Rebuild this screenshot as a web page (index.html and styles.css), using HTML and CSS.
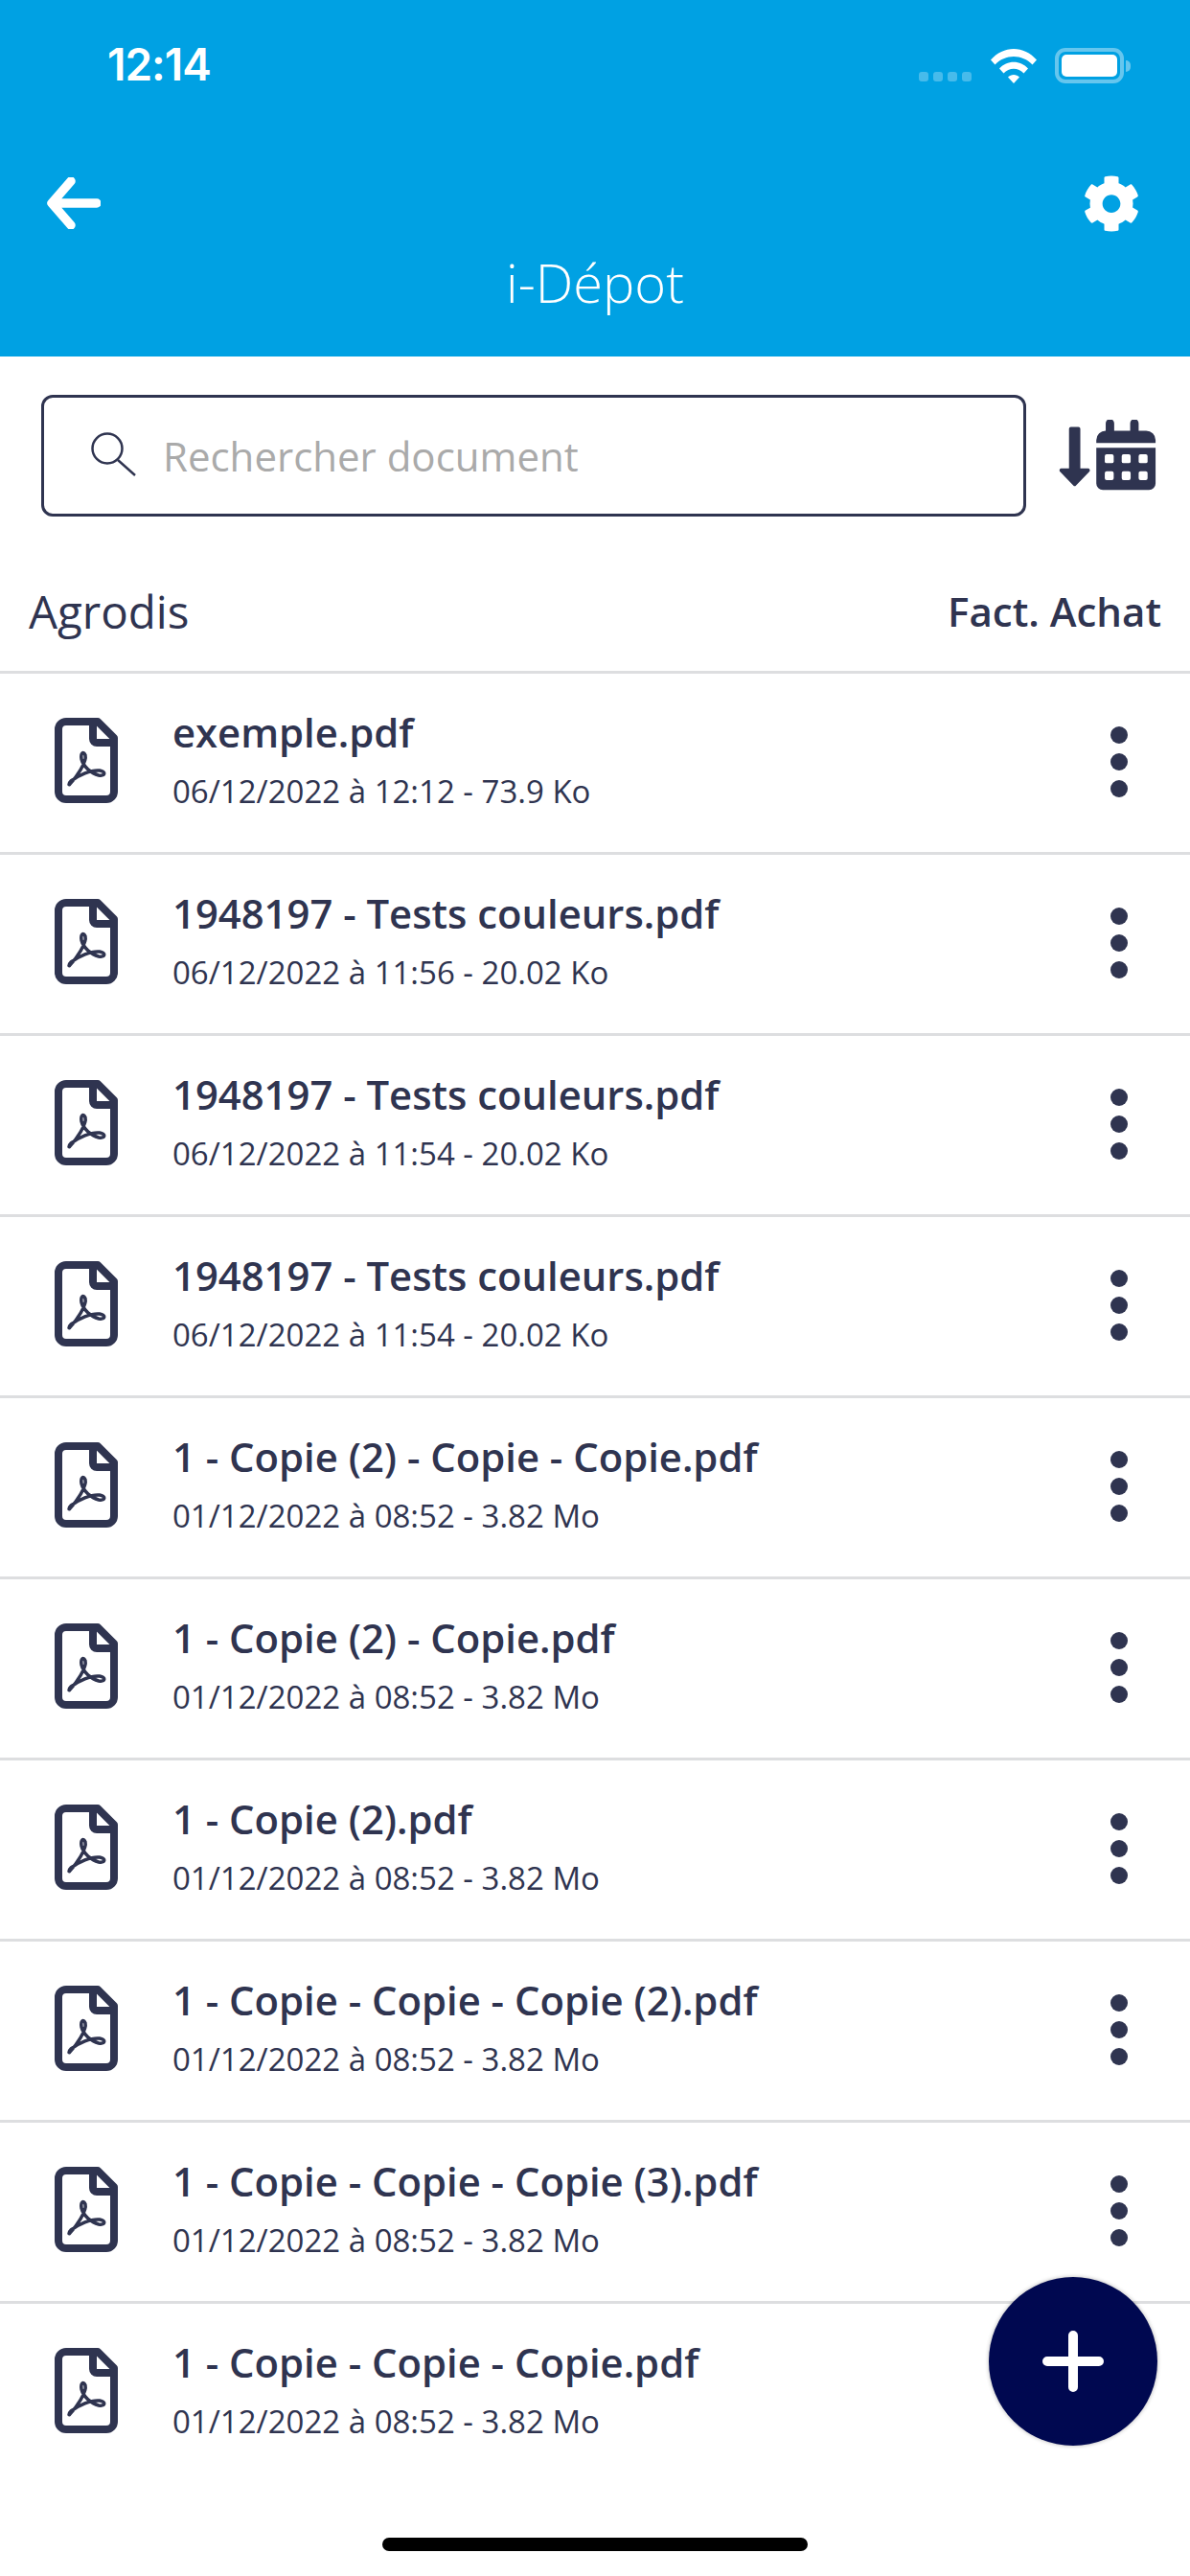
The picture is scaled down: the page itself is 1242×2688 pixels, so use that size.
FILE: index.html
```html
<!DOCTYPE html>
<html lang="fr">
<head>
  <meta charset="UTF-8">
  <meta name="viewport" content="width=device-width, initial-scale=1.0">
  <title>i-Dépot</title>
  <link rel="stylesheet" href="styles.css">
</head>
<body>
  <svg class="defs" width="0" height="0">
    <symbol id="pdf" viewBox="0 0 66 89">
      <path d="M12 4H45L62 21V77a8 8 0 0 1-8 8H12a8 8 0 0 1-8-8V12a8 8 0 0 1 8-8Z" fill="none" stroke="#2f3450" stroke-width="8" stroke-linejoin="round"/>
      <path d="M40 4V22a4 4 0 0 0 4 4H62" fill="none" stroke="#2f3450" stroke-width="8"/>
      <path d="M16 69C22 63 34 46 32 39C30 34 27 37 28 43C30 51 38 58 46 60C53 61 54 56 47 55C38 54 25 60 17 66C14 69 15 71 16 69Z" fill="none" stroke="#2f3450" stroke-width="3.5" stroke-linejoin="round"/>
    </symbol>
  </svg>

  <div class="page">
    <header class="header">
      <div class="status">
        <span class="time">12:14</span>
        <div class="status-icons">
          <div class="signal"><i></i><i></i><i></i><i></i></div>
          <svg class="wifi" viewBox="0 0 48 37">
            <path d="M0 12.5C13-3 35-3 48 12.5L43.500 17.500C33 6 15 6 4.500 17.500Z" fill="#fff"/>
            <path d="M9 21.500C17 12.500 31 12.500 39 21.500L34.500 26.500C29 20 19 20 13.500 26.500Z" fill="#fff"/>
            <path d="M18 30.500C21 27 27 27 30 30.500L24 37Z" fill="#fff"/>
          </svg>
          <div class="battery"><div class="battery-level"></div></div>
        </div>
      </div>
      <div class="nav">
        <svg class="back" viewBox="0 0 56 54">
          <path d="M25 4L5 27L25 50M7 27H52" fill="none" stroke="#fff" stroke-width="9.500" stroke-linecap="round" stroke-linejoin="round"/>
        </svg>
        <svg class="gear" viewBox="0 0 512 512">
          <path fill="#fff" d="M487.4 315.7l-42.6-24.6c4.3-23.2 4.3-47 0-70.2l42.6-24.6c4.9-2.800 7.100-8.600 5.500-14-11.100-35.600-30-67.800-54.700-94.600-3.800-4.100-10-5.100-14.800-2.300L380.800 110c-17.900-15.400-38.500-27.300-60.800-35.100V25.800c0-5.600-3.900-10.500-9.400-11.700-36.700-8.200-74.300-7.800-109.200 0-5.500 1.200-9.400 6.100-9.400 11.700V75c-22.200 7.900-42.800 19.800-60.800 35.100L88.700 85.500c-4.900-2.800-11-1.900-14.800 2.300-24.700 26.700-43.600 58.900-54.700 94.600-1.700 5.400.6 11.200 5.500 14L67.300 221c-4.300 23.200-4.300 47 0 70.200l-42.600 24.600c-4.900 2.800-7.100 8.600-5.500 14 11.100 35.600 30 67.800 54.700 94.600 3.800 4.100 10 5.100 14.800 2.300l42.600-24.600c17.900 15.400 38.500 27.300 60.800 35.100v49.200c0 5.600 3.900 10.500 9.400 11.700 36.700 8.200 74.300 7.800 109.200 0 5.500-1.200 9.400-6.100 9.400-11.700v-49.200c22.200-7.900 42.800-19.800 60.800-35.100l42.600 24.600c4.900 2.800 11 1.900 14.800-2.300 24.700-26.700 43.600-58.900 54.700-94.600 1.500-5.500-.7-11.300-5.600-14.100zM256 336c-44.100 0-80-35.900-80-80s35.900-80 80-80 80 35.900 80 80-35.900 80-80 80z"/>
        </svg>
      </div>
      <h1 class="title">i-Dépot</h1>
    </header>

    <div class="search-row">
      <div class="search">
        <svg class="search-icon" viewBox="0 0 48 46">
          <circle cx="17" cy="17" r="15.500" fill="none" stroke="#2f3450" stroke-width="2.500"/>
          <path d="M28 29L46 45" stroke="#2f3450" stroke-width="2.500" fill="none"/>
        </svg>
        <span class="placeholder">Rechercher document</span>
      </div>
      <svg class="sort-date" viewBox="0 0 110 76">
        <path fill="#2f3450" d="M14 9a2 2 0 0 1 2-2h8a2 2 0 0 1 2 2V51H34a2 2 0 0 1 1.500 3.500L21.500 69a2 2 0 0 1-3 0L4.500 54.500A2 2 0 0 1 6 51H14Z"/>
        <path fill="#2f3450" d="M53 3a4 4 0 0 1 9 0V11H79V3a4 4 0 0 1 9 0V11H96a10 10 0 0 1 10 10V24H43V21a10 10 0 0 1 10-10ZM43 29H106V67a7 7 0 0 1-7 7H50a7 7 0 0 1-7-7Z"/>
        <g fill="#fff">
          <rect x="52" y="36" width="9.500" height="9.500" rx="2"/>
          <rect x="70" y="36" width="9.500" height="9.500" rx="2"/>
          <rect x="88" y="36" width="9.500" height="9.500" rx="2"/>
          <rect x="52" y="54" width="9.500" height="9.500" rx="2"/>
          <rect x="70" y="54" width="9.500" height="9.500" rx="2"/>
          <rect x="88" y="54" width="9.500" height="9.500" rx="2"/>
        </g>
      </svg>
    </div>

    <div class="section">
      <span class="section-name">Agrodis</span>
      <span class="section-type">Fact. Achat</span>
    </div>

    <ul class="files">
      <li class="file">
        <svg class="file-icon"><use href="#pdf"/></svg>
        <div class="file-text">
          <div class="file-name">exemple.pdf</div>
          <div class="file-meta">06/12/2022 à 12:12 - 73.9 Ko</div>
        </div>
        <div class="more"><i></i><i></i><i></i></div>
      </li>
      <li class="file">
        <svg class="file-icon"><use href="#pdf"/></svg>
        <div class="file-text">
          <div class="file-name">1948197 - Tests couleurs.pdf</div>
          <div class="file-meta">06/12/2022 à 11:56 - 20.02 Ko</div>
        </div>
        <div class="more"><i></i><i></i><i></i></div>
      </li>
      <li class="file">
        <svg class="file-icon"><use href="#pdf"/></svg>
        <div class="file-text">
          <div class="file-name">1948197 - Tests couleurs.pdf</div>
          <div class="file-meta">06/12/2022 à 11:54 - 20.02 Ko</div>
        </div>
        <div class="more"><i></i><i></i><i></i></div>
      </li>
      <li class="file">
        <svg class="file-icon"><use href="#pdf"/></svg>
        <div class="file-text">
          <div class="file-name">1948197 - Tests couleurs.pdf</div>
          <div class="file-meta">06/12/2022 à 11:54 - 20.02 Ko</div>
        </div>
        <div class="more"><i></i><i></i><i></i></div>
      </li>
      <li class="file">
        <svg class="file-icon"><use href="#pdf"/></svg>
        <div class="file-text">
          <div class="file-name">1 - Copie (2) - Copie - Copie.pdf</div>
          <div class="file-meta">01/12/2022 à 08:52 - 3.82 Mo</div>
        </div>
        <div class="more"><i></i><i></i><i></i></div>
      </li>
      <li class="file">
        <svg class="file-icon"><use href="#pdf"/></svg>
        <div class="file-text">
          <div class="file-name">1 - Copie (2) - Copie.pdf</div>
          <div class="file-meta">01/12/2022 à 08:52 - 3.82 Mo</div>
        </div>
        <div class="more"><i></i><i></i><i></i></div>
      </li>
      <li class="file">
        <svg class="file-icon"><use href="#pdf"/></svg>
        <div class="file-text">
          <div class="file-name">1 - Copie (2).pdf</div>
          <div class="file-meta">01/12/2022 à 08:52 - 3.82 Mo</div>
        </div>
        <div class="more"><i></i><i></i><i></i></div>
      </li>
      <li class="file">
        <svg class="file-icon"><use href="#pdf"/></svg>
        <div class="file-text">
          <div class="file-name">1 - Copie - Copie - Copie (2).pdf</div>
          <div class="file-meta">01/12/2022 à 08:52 - 3.82 Mo</div>
        </div>
        <div class="more"><i></i><i></i><i></i></div>
      </li>
      <li class="file">
        <svg class="file-icon"><use href="#pdf"/></svg>
        <div class="file-text">
          <div class="file-name">1 - Copie - Copie - Copie (3).pdf</div>
          <div class="file-meta">01/12/2022 à 08:52 - 3.82 Mo</div>
        </div>
        <div class="more"><i></i><i></i><i></i></div>
      </li>
      <li class="file">
        <svg class="file-icon"><use href="#pdf"/></svg>
        <div class="file-text">
          <div class="file-name">1 - Copie - Copie - Copie.pdf</div>
          <div class="file-meta">01/12/2022 à 08:52 - 3.82 Mo</div>
        </div>
      </li>
    </ul>

    <button class="fab" type="button">
      <svg viewBox="0 0 64 64" width="64" height="64">
        <path d="M32 5V59M5 32H59" stroke="#fff" stroke-width="10" stroke-linecap="round"/>
      </svg>
    </button>
    <div class="home-bar"></div>
  </div>
</body>
</html>
```

FILE: styles.css
```css
*{margin:0;padding:0;box-sizing:border-box;}
html,body{width:1242px;height:2688px;overflow:hidden;background:#fff;}
body{font-family:'Open Sans',sans-serif;color:#2f3450;}
.defs{position:absolute;}
.page{position:relative;width:1242px;height:2688px;background:#fff;}

/* header */
.header{height:372px;background:#00a1e3;color:#fff;display:flex;flex-direction:column;}
.status{height:134px;padding:44px 69px 0 112px;display:flex;justify-content:space-between;align-items:flex-start;}
.time{font-family:Inter,sans-serif;font-size:46px;font-weight:600;line-height:47px;letter-spacing:-1px;}
.status-icons{display:flex;align-items:flex-start;margin-top:6px;}
.signal{display:flex;gap:5px;margin-top:25px;margin-right:20px;}
.signal i{display:block;width:10px;height:10px;border-radius:3px;background:rgba(255,255,255,.28);}
.wifi{width:48px;height:37px;margin-right:19px;}
.battery{position:relative;width:72px;height:37px;border:4px solid rgba(255,255,255,.4);border-radius:11px;padding:3px;}
.battery:after{content:'';position:absolute;right:-11px;top:9px;width:5px;height:12px;border-radius:0 6px 6px 0;background:rgba(255,255,255,.4);}
.battery-level{height:100%;background:#fff;border-radius:5px;}
.nav{height:62px;padding:0 52px 0 49px;display:flex;justify-content:space-between;align-items:center;margin-top:47px;}
.back{width:56px;height:54px;}
.gear{width:60px;height:61px;}
.title{font-size:56px;font-weight:300;line-height:74px;text-align:center;margin-top:14px;}

/* search */
.search-row{display:flex;align-items:center;padding:40px 32px 0 43px;gap:31px;}
.search{flex:1;height:127px;border:3px solid #2f3450;border-radius:12px;display:flex;align-items:center;padding-left:49px;}
.search-icon{width:48px;height:46px;margin-right:27px;margin-top:-3px;}
.placeholder{font-size:42px;color:#aaaaaa;}
.sort-date{width:108px;height:76px;}

.section{height:161px;padding:0 30px 27px 30px;display:flex;justify-content:space-between;align-items:flex-end;}
.section-name{font-size:47.5px;line-height:70px;}
.section-type{font-size:42px;font-weight:600;line-height:70px;}

/* list */
.files{list-style:none;}
.file{position:relative;height:189px;border-top:3px solid #dddee0;display:flex;align-items:center;padding:0 65px 0 57px;}
.file-icon{width:66px;height:89px;flex:none;margin-right:57px;margin-top:-5px;}
.file-text{flex:1;margin-top:-8px;}
.file-name{font-size:41.8px;font-weight:600;line-height:56px;}
.file-meta{font-size:33px;line-height:44px;margin-top:12px;}
.more{width:18px;display:flex;flex-direction:column;gap:10px;margin-top:-3px;}
.more i{display:block;width:18px;height:18px;border-radius:50%;background:#2f3450;}

/* floating button + home indicator */
.fab{position:absolute;left:1032px;top:2376px;width:176px;height:176px;border:none;border-radius:50%;background:#000850;box-shadow:0 0 4px rgba(0,0,0,.3);display:flex;align-items:center;justify-content:center;}
.home-bar{position:absolute;left:399px;top:2648px;width:444px;height:14px;border-radius:7px;background:#000;}
```
